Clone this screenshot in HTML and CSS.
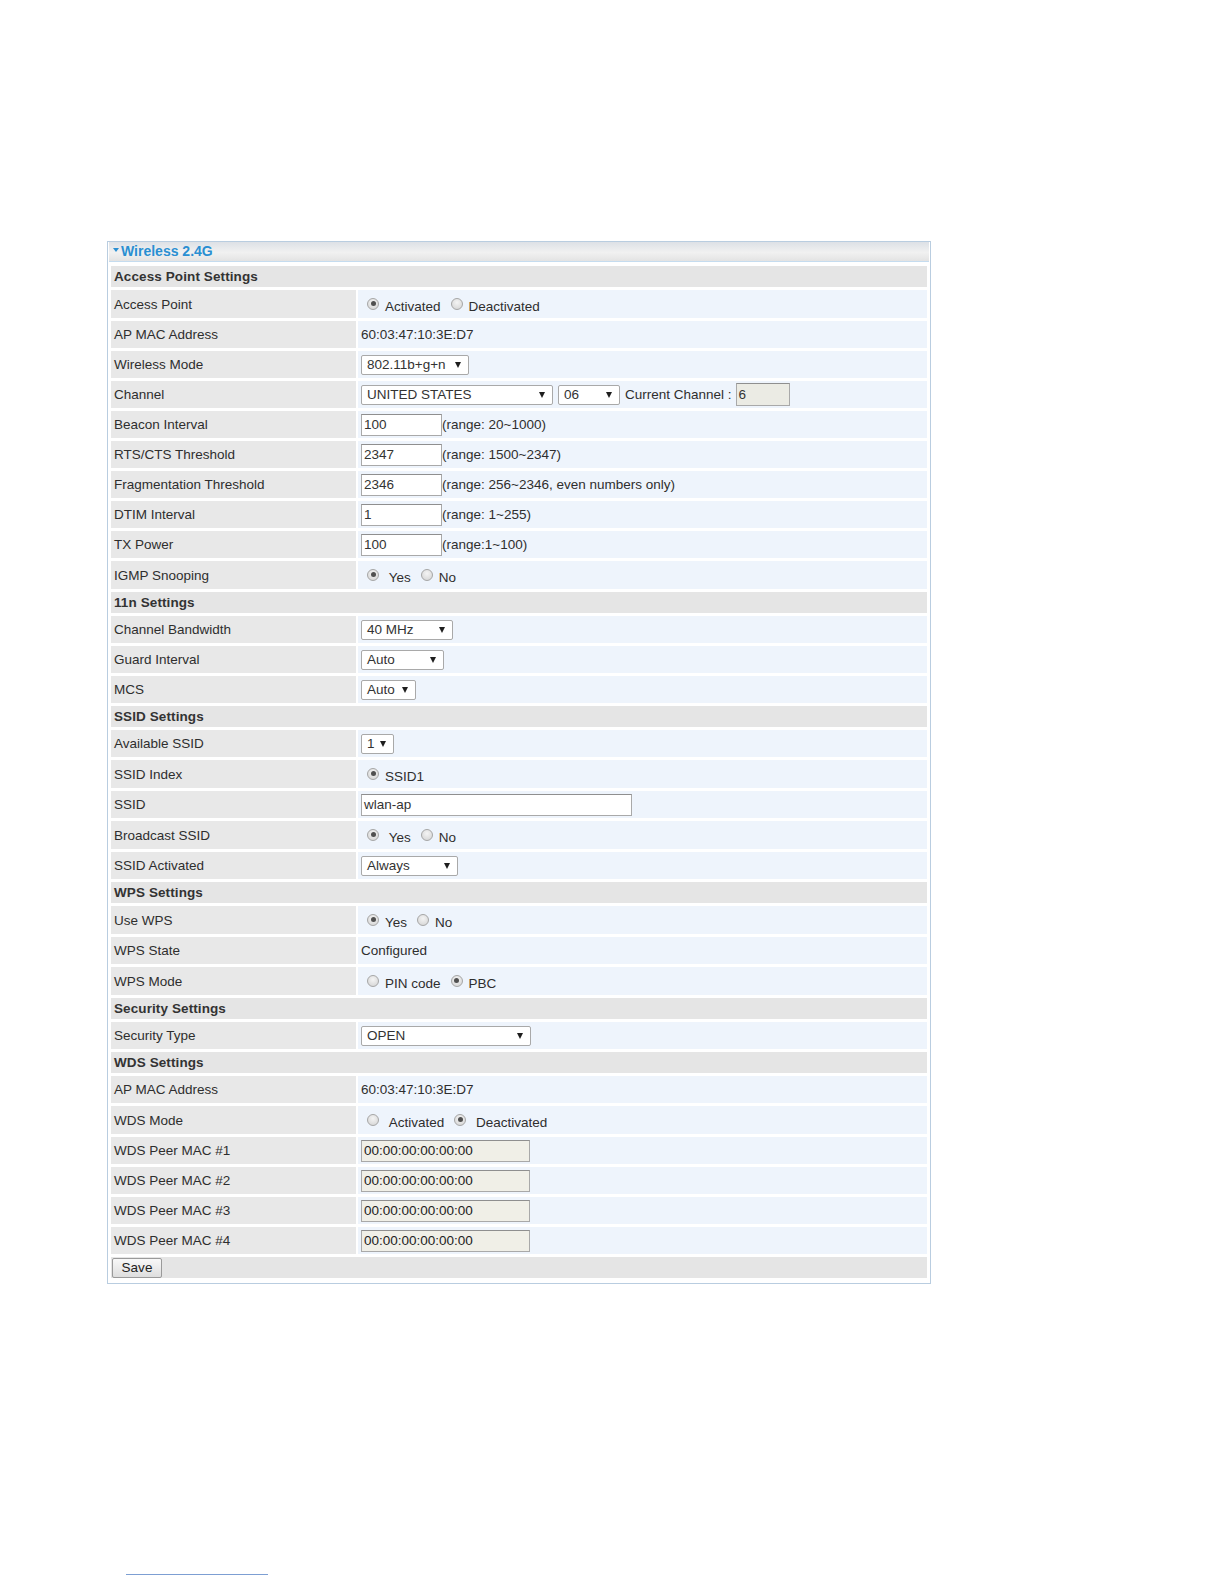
FILE: index.html
```html
<!DOCTYPE html>
<html>
<head>
<meta charset="utf-8">
<title>Wireless 2.4G</title>
<link rel="stylesheet" href="styles.css">
</head>
<body>
<div class="page">
  <div class="panel">
    <div class="title"><span class="tri"></span>Wireless 2.4G</div>
    <table class="cfg">
      <tr class="sec"><td colspan="2">Access Point Settings</td></tr>
      <tr class="r rr"><td class="lbl">Access Point</td><td class="val"><span class="opt"><span class="rb on"></span>Activated</span><span class="opt"><span class="rb"></span>Deactivated</span></td></tr>
      <tr class="r"><td class="lbl">AP MAC Address</td><td class="val">60:03:47:10:3E:D7</td></tr>
      <tr class="r"><td class="lbl">Wireless Mode</td><td class="val"><span class="sel w108">802.11b+g+n<span class="arr"></span></span></td></tr>
      <tr class="r"><td class="lbl">Channel</td><td class="val"><div class="line"><span class="sel w192">UNITED STATES<span class="arr"></span></span><span class="sel w62">06<span class="arr"></span></span><span class="txt">Current Channel :</span><span class="inp dis w54">6</span></div></td></tr>
      <tr class="r"><td class="lbl">Beacon Interval</td><td class="val"><span class="inp w81">100</span>(range: 20~1000)</td></tr>
      <tr class="r"><td class="lbl">RTS/CTS Threshold</td><td class="val"><span class="inp w81">2347</span>(range: 1500~2347)</td></tr>
      <tr class="r"><td class="lbl">Fragmentation Threshold</td><td class="val"><span class="inp w81">2346</span>(range: 256~2346, even numbers only)</td></tr>
      <tr class="r"><td class="lbl">DTIM Interval</td><td class="val"><span class="inp w81">1</span>(range: 1~255)</td></tr>
      <tr class="r"><td class="lbl">TX Power</td><td class="val"><span class="inp w81">100</span>(range:1~100)</td></tr>
      <tr class="r rr"><td class="lbl">IGMP Snooping</td><td class="val"><span class="opt"><span class="rb on"></span>&nbsp;Yes</span><span class="opt"><span class="rb"></span>No</span></td></tr>

      <tr class="sec"><td colspan="2">11n Settings</td></tr>
      <tr class="r"><td class="lbl">Channel Bandwidth</td><td class="val"><span class="sel w92">40 MHz<span class="arr"></span></span></td></tr>
      <tr class="r"><td class="lbl">Guard Interval</td><td class="val"><span class="sel w83">Auto<span class="arr"></span></span></td></tr>
      <tr class="r"><td class="lbl">MCS</td><td class="val"><span class="sel w55">Auto<span class="arr"></span></span></td></tr>

      <tr class="sec"><td colspan="2">SSID Settings</td></tr>
      <tr class="r"><td class="lbl">Available SSID</td><td class="val"><span class="sel w33">1<span class="arr"></span></span></td></tr>
      <tr class="r rr"><td class="lbl">SSID Index</td><td class="val"><span class="opt"><span class="rb on"></span>SSID1</span></td></tr>
      <tr class="r"><td class="lbl">SSID</td><td class="val"><span class="inp w271">wlan-ap</span></td></tr>
      <tr class="r rr"><td class="lbl">Broadcast SSID</td><td class="val"><span class="opt"><span class="rb on"></span>&nbsp;Yes</span><span class="opt"><span class="rb"></span>No</span></td></tr>
      <tr class="r"><td class="lbl">SSID Activated</td><td class="val"><span class="sel w97">Always<span class="arr"></span></span></td></tr>

      <tr class="sec"><td colspan="2">WPS Settings</td></tr>
      <tr class="r rr"><td class="lbl">Use WPS</td><td class="val"><span class="opt"><span class="rb on"></span>Yes</span><span class="opt"><span class="rb"></span>No</span></td></tr>
      <tr class="r"><td class="lbl">WPS State</td><td class="val">Configured</td></tr>
      <tr class="r rr"><td class="lbl">WPS Mode</td><td class="val"><span class="opt"><span class="rb"></span>PIN code</span><span class="opt"><span class="rb on"></span>PBC</span></td></tr>

      <tr class="sec"><td colspan="2">Security Settings</td></tr>
      <tr class="r"><td class="lbl">Security Type</td><td class="val"><span class="sel w170">OPEN<span class="arr"></span></span></td></tr>

      <tr class="sec"><td colspan="2">WDS Settings</td></tr>
      <tr class="r"><td class="lbl">AP MAC Address</td><td class="val">60:03:47:10:3E:D7</td></tr>
      <tr class="r rr"><td class="lbl">WDS Mode</td><td class="val"><span class="opt"><span class="rb"></span>&nbsp;Activated</span><span class="opt"><span class="rb on"></span>&nbsp;Deactivated</span></td></tr>
      <tr class="r"><td class="lbl">WDS Peer MAC #1</td><td class="val"><span class="inp mac w169">00:00:00:00:00:00</span></td></tr>
      <tr class="r"><td class="lbl">WDS Peer MAC #2</td><td class="val"><span class="inp mac w169">00:00:00:00:00:00</span></td></tr>
      <tr class="r"><td class="lbl">WDS Peer MAC #3</td><td class="val"><span class="inp mac w169">00:00:00:00:00:00</span></td></tr>
      <tr class="r"><td class="lbl">WDS Peer MAC #4</td><td class="val"><span class="inp mac w169">00:00:00:00:00:00</span></td></tr>
      <tr class="sec save"><td colspan="2"><span class="btn">Save</span></td></tr>
    </table>
  </div>
  <div class="rule"></div>
</div>
</body>
</html>
```

FILE: styles.css
```css
html, body {
  margin: 0;
  padding: 0;
  background: #ffffff;
}
body {
  font-family: "Liberation Sans", Arial, sans-serif;
  font-size: 13.5px;
  color: #2e2e2e;
}
.page {
  padding: 241px 0 0 107px;
}
.panel {
  width: 820px;
  border: 1px solid #b9cde0;
  padding: 0 1px 2px 1px;
  background: #ffffff;
}
.title {
  height: 19px;
  border-bottom: 1px solid #c5dcef;
  background: linear-gradient(#dde1e6, #f1f1f1 55%, #e3e3e3);
  color: #2a8fd2;
  font-weight: bold;
  font-size: 14px;
  line-height: 19px;
  padding-left: 4px;
  display: flex;
  align-items: center;
}
.tri {
  width: 0;
  height: 0;
  border-left: 3px solid transparent;
  border-right: 3px solid transparent;
  border-top: 4px solid #2a8fd2;
  margin-right: 2px;
  margin-bottom: 3px;
}
.cfg {
  width: 100%;
  border-collapse: separate;
  border-spacing: 2px 3px;
  margin-top: 1px;
}
.cfg td {
  padding: 0;
  vertical-align: middle;
}
.sec { height: 21px; }
.sec td {
  background: #e5e5e5;
  font-weight: bold;
  padding-left: 3px;
  letter-spacing: 0.1px;
  color: #333333;
}
.r { height: 27px; }
.rr { height: 28px; }
.lbl {
  width: 242px;
  background: #e8e8e8;
  padding-left: 3px !important;
}
.val {
  background: #eef4fc;
  padding-left: 3px !important;
  white-space: nowrap;
}
.rr .val {
  padding-top: 4px !important;
}
.line {
  display: flex;
  align-items: center;
}
.opt {
  display: inline-flex;
  align-items: center;
  margin-left: 6px;
  margin-right: 4px;
}
.rb {
  position: relative;
  display: inline-block;
  box-sizing: border-box;
  width: 12px;
  height: 12px;
  border-radius: 50%;
  border: 1px solid #a6a6a6;
  background: radial-gradient(circle at 50% 35%, #f4f4f4, #d2d2d2);
  margin-right: 6px;
  margin-bottom: 5px;
}
.rb.on::after {
  content: "";
  position: absolute;
  left: 2.5px;
  top: 2.5px;
  width: 5px;
  height: 5px;
  border-radius: 50%;
  background: #505050;
}
.sel {
  position: relative;
  display: inline-flex;
  align-items: center;
  box-sizing: border-box;
  height: 20px;
  border: 1px solid #a9a9a9;
  border-radius: 2px;
  background: #ffffff;
  padding-left: 5px;
  vertical-align: middle;
  color: #333333;
}
.arr {
  position: absolute;
  right: 7px;
  top: 6px;
  width: 0;
  height: 0;
  border-left: 3.5px solid transparent;
  border-right: 3.5px solid transparent;
  border-top: 6px solid #1e1e1e;
}
.w108 { width: 108px; }
.w192 { width: 192px; }
.w62 { width: 62px; margin-left: 5px; }
.w92 { width: 92px; }
.w83 { width: 83px; }
.w55 { width: 55px; }
.w33 { width: 33px; }
.w97 { width: 97px; }
.w170 { width: 170px; }
.txt {
  margin-left: 5px;
  margin-right: 4px;
}
.inp {
  display: inline-flex;
  align-items: center;
  box-sizing: border-box;
  height: 22px;
  border: 1px solid #a9a9a9;
  border-top-color: #8f8f8f;
  background: #ffffff;
  padding-left: 2px;
  vertical-align: middle;
  color: #333333;
}
.inp.dis {
  background: #ebebe4;
  height: 23px;
}
.inp.mac {
  background: #f0efe7;
  color: #222222;
}
.w81 { width: 81px; }
.w54 { width: 54px; }
.w271 { width: 271px; }
.w169 { width: 169px; }
.save td {
  padding-left: 1px;
  font-weight: normal;
}
.btn {
  display: inline-flex;
  align-items: center;
  justify-content: center;
  box-sizing: border-box;
  width: 50px;
  height: 20px;
  border: 1px solid #9a9a9a;
  border-radius: 2px;
  background: linear-gradient(#f8f8f8, #dedede);
  color: #222222;
}
.rule {
  margin: 290px 0 0 19px;
  width: 142px;
  height: 1px;
  background: #7d9fd3;
}
```
